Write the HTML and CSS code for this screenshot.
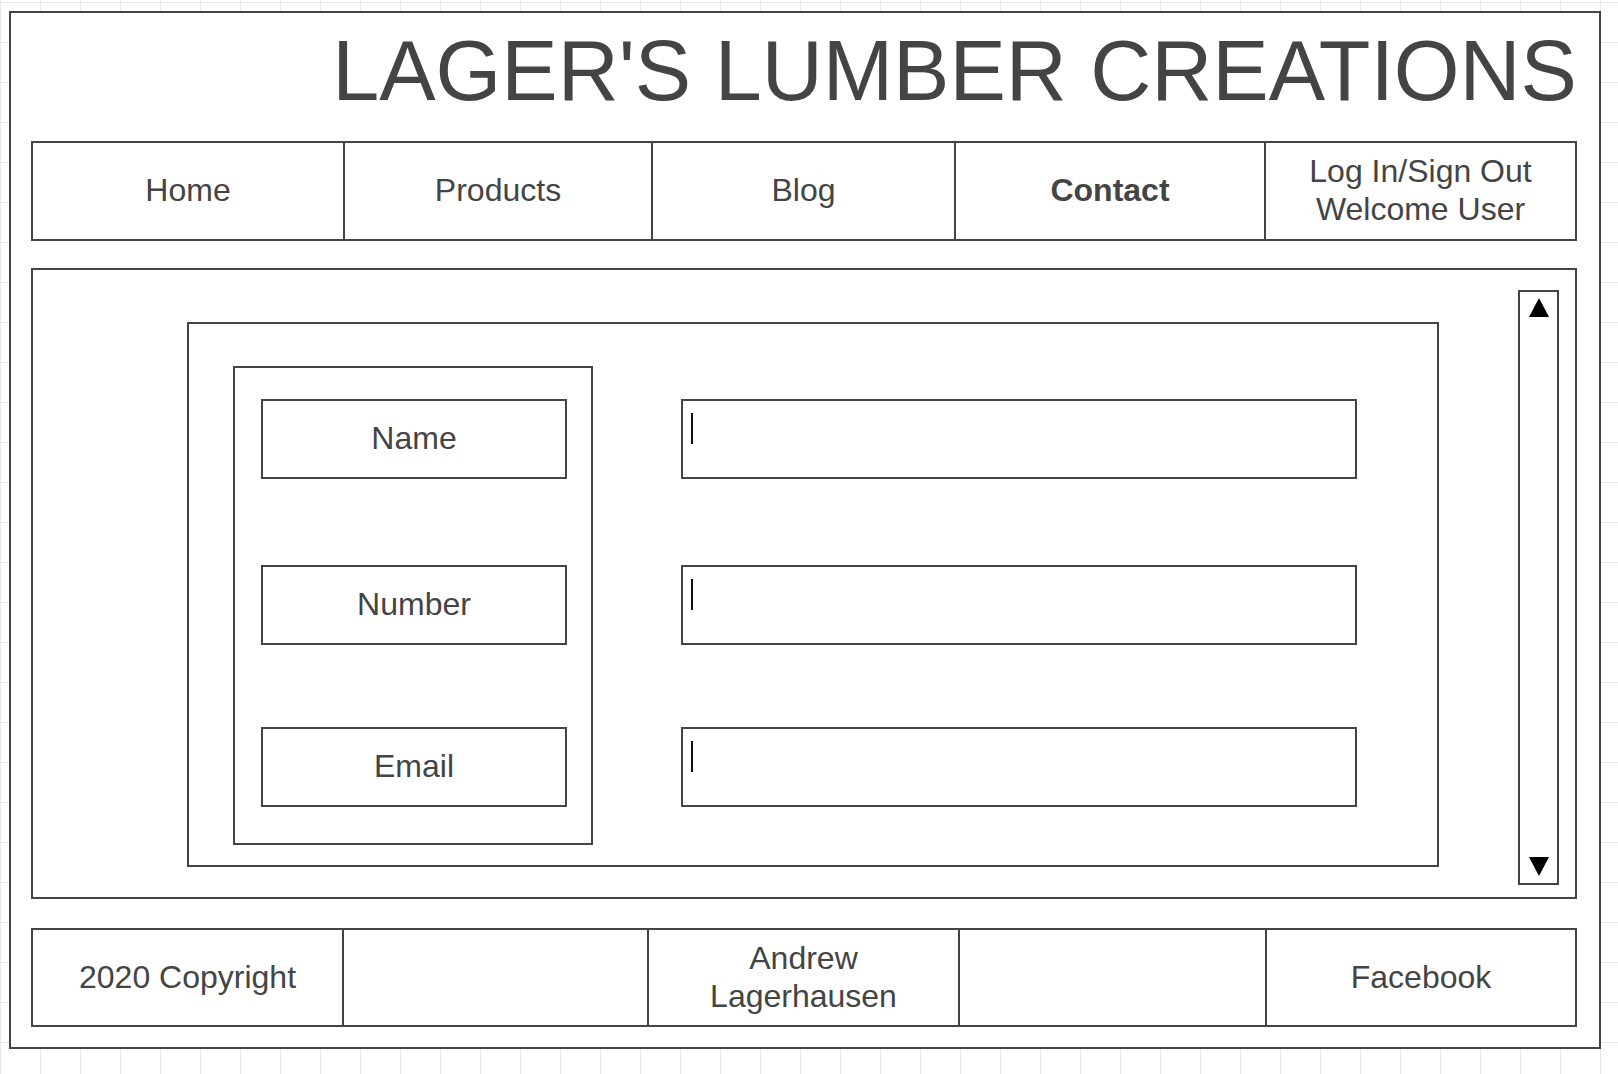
FILE: index.html
```html
<!DOCTYPE html>
<html lang="en">
<head>
<meta charset="utf-8">
<title>Lager's Lumber Creations - Contact</title>
<link rel="stylesheet" href="styles.css">
</head>
<body>
<div class="page">
  <div class="frame">
    <header class="title">LAGER'S LUMBER CREATIONS</header>
    <nav class="nav">
      <div class="cell">Home</div>
      <div class="cell">Products</div>
      <div class="cell">Blog</div>
      <div class="cell active">Contact</div>
      <div class="cell">Log In/Sign Out<br>Welcome User</div>
    </nav>
    <main class="main">
      <div class="form">
        <div class="labels">
          <div class="label">Name</div>
          <div class="label">Number</div>
          <div class="label">Email</div>
        </div>
        <div class="fields">
          <div class="field"><span class="caret"></span></div>
          <div class="field"><span class="caret"></span></div>
          <div class="field"><span class="caret"></span></div>
        </div>
      </div>
      <div class="scroll">
        <svg class="arrow" width="20" height="19" viewBox="0 0 20 19"><polygon points="10,0 20,19 0,19" fill="#000"/></svg>
        <svg class="arrow" width="20" height="19" viewBox="0 0 20 19"><polygon points="0,0 20,0 10,19" fill="#000"/></svg>
      </div>
    </main>
    <footer class="footer">
      <div class="cell">2020 Copyright</div>
      <div class="cell"></div>
      <div class="cell">Andrew<br>Lagerhausen</div>
      <div class="cell"></div>
      <div class="cell">Facebook</div>
    </footer>
  </div>
</div>
</body>
</html>
```
FILE: styles.css
```css
* { box-sizing: border-box; }
html, body { margin: 0; }
body {
  min-height: 1074px;
  background-color: #fff;
  background-image:
    linear-gradient(to right, #e6e6e6 1px, transparent 1px),
    linear-gradient(to bottom, #e6e6e6 1px, transparent 1px);
  background-size: 40px 40px;
  background-position: 0 2px;
  font-family: "Liberation Sans", Arial, sans-serif;
  color: #444;
}
.page { padding: 11px 0 0 9px; }
.frame {
  width: 1592px;
  border: 2px solid #444;
  background: #fff;
  padding: 0 22px 20px 20px;
}
.title {
  font-size: 84.5px;
  line-height: 85px;
  height: 128px;
  padding: 16px 0 27px;
  text-align: right;
  white-space: nowrap;
}
.nav, .footer {
  display: grid;
  border: 2px solid #444;
}
.nav {
  height: 100px;
  grid-template-columns: 310px 308px 303px 310px 311px;
}
.footer {
  margin-top: 29px;
  height: 99px;
  grid-template-columns: 309px 305px 311px 307px 310px;
}
.cell {
  display: flex;
  align-items: center;
  justify-content: center;
  text-align: center;
  font-size: 32px;
  line-height: 38px;
  padding-bottom: 2px;
}
.cell + .cell { border-left: 2px solid #444; }
.cell.active { font-weight: bold; }
.main {
  margin-top: 27px;
  height: 631px;
  border: 2px solid #444;
  display: flex;
  align-items: flex-start;
  padding: 20px 0 0 154px;
}
.form {
  margin-top: 32px;
  width: 1252px;
  height: 545px;
  border: 2px solid #444;
  display: flex;
  align-items: flex-start;
  padding: 42px 0 0 44px;
}
.labels {
  width: 360px;
  height: 479px;
  border: 2px solid #444;
  display: flex;
  flex-direction: column;
  padding: 31px 0 0 26px;
}
.label {
  width: 306px;
  height: 80px;
  border: 2px solid #444;
  display: flex;
  align-items: center;
  justify-content: center;
  font-size: 32px;
  padding-bottom: 2px;
}
.label:nth-child(2), .field:nth-child(2) { margin-top: 86px; }
.label:nth-child(3), .field:nth-child(3) { margin-top: 82px; }
.fields {
  margin-left: 88px;
  padding-top: 33px;
  display: flex;
  flex-direction: column;
}
.field {
  width: 676px;
  height: 80px;
  border: 2px solid #444;
  position: relative;
}
.caret {
  position: absolute;
  left: 8px;
  top: 12px;
  width: 2px;
  height: 31px;
  background: #111;
}
.scroll {
  margin-left: 79px;
  width: 41px;
  height: 595px;
  border: 2px solid #444;
  display: flex;
  flex-direction: column;
  justify-content: space-between;
  align-items: center;
  padding: 6px 0 7px 1px;
}
.arrow { display: block; }
```
